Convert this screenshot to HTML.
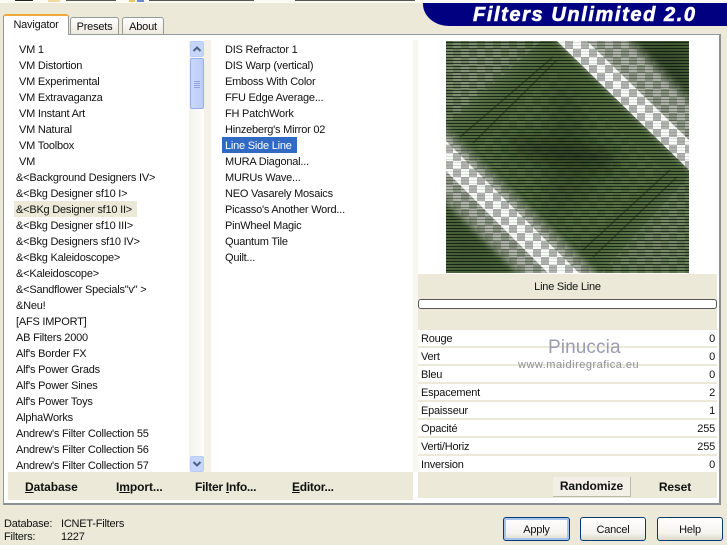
<!DOCTYPE html>
<html><head><meta charset="utf-8">
<style>
html,body{margin:0;padding:0}
body{width:727px;height:543px;overflow:hidden;position:relative;background:#ece9d8;font-family:"Liberation Sans",sans-serif;font-size:11px;letter-spacing:-.22px;color:#111}
.a{position:absolute;white-space:nowrap}
.t{position:absolute;white-space:nowrap;line-height:16px;height:16px;margin-top:1px}
.b{font-weight:bold;font-size:12px;letter-spacing:-.08px}
.row{position:absolute;left:418px;width:299px;height:16px;background:#fff;line-height:18px}
.row span{position:absolute;left:3px}
.row i{position:absolute;right:2px;font-style:normal}
.btn{position:absolute;box-sizing:border-box;border:1px solid #003c74;border-radius:3px;background:linear-gradient(#fff,#f4f3ee 70%,#dcd8c8);text-align:center;line-height:24px}
</style></head><body>
<div class="a" style="left:0;top:0;width:727px;height:3px;background:#fbfaf5"></div>
<div class="a" style="left:15px;top:0;width:18px;height:1px;background:#222"></div>
<div class="a" style="left:48px;top:0;width:12px;height:2px;background:#f3d9a4"></div>
<div class="a" style="left:66px;top:0;width:50px;height:1px;background:#555"></div>
<div class="a" style="left:129px;top:0;width:6px;height:2px;background:#e8c860"></div>
<div class="a" style="left:137px;top:0;width:7px;height:2px;background:#6a8ad0"></div>
<div class="a" style="left:149px;top:0;width:105px;height:1px;background:#555"></div>
<div class="a" style="left:295px;top:0;width:120px;height:1px;background:#555"></div>
<!-- logo -->
<div class="a" style="left:423px;top:3px;width:304px;height:23px;background:#000080;border-bottom-left-radius:26px 22px"></div>
<div class="a" style="left:473px;top:3px;font:italic bold 20px/25px 'Liberation Sans',sans-serif;color:#fff;letter-spacing:1.6px;-webkit-text-stroke:.6px #fff">Filters Unlimited 2.0</div>
<!-- panel -->
<div class="a" style="left:3px;top:34px;width:718px;height:471px;box-sizing:border-box;border:1px solid #919b9c;border-bottom:2px solid #8a9294;border-right:2px solid #8a9294;background:#fff"></div>
<!-- tabs -->
<div class="a" style="left:70px;top:17px;width:49px;height:17px;box-sizing:border-box;border:1px solid #919b9c;border-bottom:0;border-radius:3px 3px 0 0;background:linear-gradient(#fff,#ece9dc);text-align:center;line-height:18px">Presets</div>
<div class="a" style="left:122px;top:17px;width:42px;height:17px;box-sizing:border-box;border:1px solid #919b9c;border-bottom:0;border-radius:3px 3px 0 0;background:linear-gradient(#fff,#ece9dc);text-align:center;line-height:18px">About</div>
<div class="a" style="left:3px;top:14px;width:66px;height:21px;box-sizing:border-box;border:1px solid #919b9c;border-top:2px solid #f0a838;border-bottom:0;border-radius:3px 3px 0 0;background:#fff;text-align:center;line-height:18px">Navigator</div>
<!-- gutters -->
<div class="a" style="left:204px;top:40px;width:7px;height:432px;background:#f4f2e8"></div>
<div class="a" style="left:413px;top:40px;width:5px;height:432px;background:#f7f6ef"></div>
<!-- scrollbar -->
<div class="a" style="left:189px;top:41px;width:15px;height:431px;background:linear-gradient(90deg,#f3f3ee,#fdfdfa)"></div>
<div class="a" style="left:190px;top:41px;width:14px;height:16px;box-sizing:border-box;border:1px solid #b8cdf5;border-radius:2px;background:#c6d6fa"></div>
<svg class="a" style="left:190px;top:41px" width="14" height="16"><path d="M3.5 10L7 6.500L10.500 10" fill="none" stroke="#4d6185" stroke-width="2"/></svg>
<div class="a" style="left:190px;top:58px;width:14px;height:51px;box-sizing:border-box;border:1px solid #98b1e4;border-radius:2px;background:linear-gradient(90deg,#c9d8fb,#bccdf8)"></div>
<div class="a" style="left:194px;top:81px;width:6px;height:1px;background:#8ea6dc;box-shadow:0 2px 0 #8ea6dc,0 4px 0 #8ea6dc,0 6px 0 #8ea6dc"></div>
<div class="a" style="left:190px;top:456px;width:14px;height:16px;box-sizing:border-box;border:1px solid #b8cdf5;border-radius:2px;background:#c6d6fa"></div>
<svg class="a" style="left:190px;top:456px" width="14" height="16"><path d="M3.500 6L7 9.500L10.500 6" fill="none" stroke="#4d6185" stroke-width="2"/></svg>
<!-- left list -->
<div class="a" style="left:14px;top:201px;width:123px;height:16px;background:#ece9d8"></div>
<div class="t" style="left:19px;top:41px">VM 1</div>
<div class="t" style="left:19px;top:57px">VM Distortion</div>
<div class="t" style="left:19px;top:73px">VM Experimental</div>
<div class="t" style="left:19px;top:89px">VM Extravaganza</div>
<div class="t" style="left:19px;top:105px">VM Instant Art</div>
<div class="t" style="left:19px;top:121px">VM Natural</div>
<div class="t" style="left:19px;top:137px">VM Toolbox</div>
<div class="t" style="left:19px;top:153px">VM</div>
<div class="t" style="left:16px;top:169px">&amp;&lt;Background Designers IV&gt;</div>
<div class="t" style="left:16px;top:185px">&amp;&lt;Bkg Designer sf10 I&gt;</div>
<div class="t" style="left:16px;top:201px">&amp;&lt;BKg Designer sf10 II&gt;</div>
<div class="t" style="left:16px;top:217px">&amp;&lt;Bkg Designer sf10 III&gt;</div>
<div class="t" style="left:16px;top:233px">&amp;&lt;Bkg Designers sf10 IV&gt;</div>
<div class="t" style="left:16px;top:249px">&amp;&lt;Bkg Kaleidoscope&gt;</div>
<div class="t" style="left:16px;top:265px">&amp;&lt;Kaleidoscope&gt;</div>
<div class="t" style="left:16px;top:281px">&amp;&lt;Sandflower Specials"v" &gt;</div>
<div class="t" style="left:16px;top:297px">&amp;Neu!</div>
<div class="t" style="left:16px;top:313px">[AFS IMPORT]</div>
<div class="t" style="left:16px;top:329px">AB Filters 2000</div>
<div class="t" style="left:16px;top:345px">Alf's Border FX</div>
<div class="t" style="left:16px;top:361px">Alf's Power Grads</div>
<div class="t" style="left:16px;top:377px">Alf's Power Sines</div>
<div class="t" style="left:16px;top:393px">Alf's Power Toys</div>
<div class="t" style="left:16px;top:409px">AlphaWorks</div>
<div class="t" style="left:16px;top:425px">Andrew's Filter Collection 55</div>
<div class="t" style="left:16px;top:441px">Andrew's Filter Collection 56</div>
<div class="t" style="left:16px;top:457px">Andrew's Filter Collection 57</div>
<!-- middle list -->
<div class="a" style="left:222px;top:137px;width:75px;height:16px;background:#316ac5"></div>
<div class="t" style="left:225px;top:41px">DIS Refractor 1</div>
<div class="t" style="left:225px;top:57px">DIS Warp (vertical)</div>
<div class="t" style="left:225px;top:73px">Emboss With Color</div>
<div class="t" style="left:225px;top:89px">FFU Edge Average...</div>
<div class="t" style="left:225px;top:105px">FH PatchWork</div>
<div class="t" style="left:225px;top:121px">Hinzeberg's Mirror 02</div>
<div class="t" style="left:225px;top:137px;color:#fff">Line Side Line</div>
<div class="t" style="left:225px;top:153px">MURA Diagonal...</div>
<div class="t" style="left:225px;top:169px">MURUs Wave...</div>
<div class="t" style="left:225px;top:185px">NEO Vasarely Mosaics</div>
<div class="t" style="left:225px;top:201px">Picasso's Another Word...</div>
<div class="t" style="left:225px;top:217px">PinWheel Magic</div>
<div class="t" style="left:225px;top:233px">Quantum Tile</div>
<div class="t" style="left:225px;top:249px">Quilt...</div>
<!-- bottom bar -->
<div class="a" style="left:8px;top:472px;width:405px;height:28px;background:#ece9d8"></div>
<div class="a b" style="left:25px;top:480px"><u>D</u>atabase</div>
<div class="a b" style="left:116px;top:480px">I<u>m</u>port...</div>
<div class="a b" style="left:195px;top:480px;letter-spacing:-.25px">Filter <u>I</u>nfo...</div>
<div class="a b" style="left:292px;top:480px;letter-spacing:-.25px"><u>E</u>ditor...</div>
<!-- preview -->
<svg class="a" style="left:446px;top:41px" width="243" height="232" viewBox="0 0 243 232">
<defs>
<pattern id="c" width="16" height="16" patternUnits="userSpaceOnUse" x="7" y="0"><rect width="16" height="16" fill="#fafaf8"/><rect width="8" height="8" fill="#b2b4b0"/><rect x="8" y="8" width="8" height="8" fill="#b2b4b0"/></pattern>
<pattern id="c2" width="16" height="16" patternUnits="userSpaceOnUse" x="7" y="0"><rect width="16" height="16" fill="#b9bdb4"/><rect width="8" height="8" fill="#929a8c"/><rect x="8" y="8" width="8" height="8" fill="#929a8c"/></pattern>
<pattern id="f" width="16" height="16" patternUnits="userSpaceOnUse" x="7" y="0"><rect width="8" height="8" fill="#fff"/><rect x="8" y="8" width="8" height="8" fill="#fff"/></pattern>
<pattern id="s" width="3" height="3" patternUnits="userSpaceOnUse"><rect width="3" height="1" y="1" fill="#060d05"/></pattern>
<filter id="b3" x="-30%" y="-30%" width="160%" height="160%"><feGaussianBlur stdDeviation="4"/></filter>
<filter id="b9" x="-30%" y="-30%" width="160%" height="160%"><feGaussianBlur stdDeviation="10"/></filter>
<mask id="ms" maskUnits="userSpaceOnUse" x="0" y="0" width="243" height="232"><g filter="url(#b3)" fill="#fff"><polygon points="92,-20 164,-20 263,79 263,146"/><polygon points="-20,70 157,240 82,240 -20,140"/></g></mask>
<clipPath id="cb"><polygon points="111,0 141,0 243,99 243,129"/><polygon points="0,100 133,232 102,232 0,130"/></clipPath>
</defs>
<rect width="243" height="232" fill="#4f693d"/>
<polygon points="0,0 95,0 0,85" fill="#8e9a84" opacity=".55" filter="url(#b9)"/>
<polygon points="243,135 243,232 155,232" fill="#8e9a84" opacity=".4" filter="url(#b9)"/>
<polygon points="0,0 95,0 0,85" fill="url(#f)" opacity=".14"/>
<polygon points="243,135 243,232 155,232" fill="url(#f)" opacity=".1"/>
<polygon points="108,28 218,130 135,208 30,108" fill="url(#f)" opacity=".05"/>
<polygon points="170,0 243,0 243,70" fill="#2e3f26" opacity=".7" filter="url(#b9)"/>
<polygon points="0,165 0,232 65,232" fill="#3a5030" opacity=".6" filter="url(#b9)"/>
<polygon points="60,95 170,112 170,130 70,112" fill="#16220f" opacity=".7" filter="url(#b9)"/>
<polygon points="105,30 135,55 150,150 100,180" fill="#26391d" opacity=".4" filter="url(#b9)"/>
<rect width="243" height="232" fill="url(#s)" opacity=".72"/>
<rect width="243" height="232" fill="url(#c2)" mask="url(#ms)" opacity=".9"/>
<rect width="243" height="232" fill="url(#s)" mask="url(#ms)" opacity=".35"/>
<rect width="243" height="232" fill="url(#c)" clip-path="url(#cb)"/>
<rect width="243" height="232" fill="url(#s)" clip-path="url(#cb)" opacity=".12"/>
<g stroke="#1c2618" stroke-width="1.500" opacity=".55" fill="none">
<path d="M107 16L14 96M111 19L27 102M224 129L137 209M231 136L147 216"/>
</g>
</svg>
<!-- right side -->
<div class="a" style="left:418px;top:274px;width:299px;height:224px;background:#ece9d8"></div>
<div class="a" style="left:418px;top:279px;width:299px;text-align:center;line-height:16px">Line Side Line</div>
<div class="a" style="left:418px;top:299px;width:299px;height:10px;box-sizing:border-box;border:1px solid #555;border-radius:3px;background:#fff"></div>
<div class="row" style="top:330px"><span>Rouge</span><i>0</i></div>
<div class="row" style="top:348px"><span>Vert</span><i>0</i></div>
<div class="row" style="top:366px"><span>Bleu</span><i>0</i></div>
<div class="row" style="top:384px"><span>Espacement</span><i>2</i></div>
<div class="row" style="top:402px"><span>Epaisseur</span><i>1</i></div>
<div class="row" style="top:420px"><span>Opacité</span><i>255</i></div>
<div class="row" style="top:438px"><span>Verti/Horiz</span><i>255</i></div>
<div class="row" style="top:456px"><span>Inversion</span><i>0</i></div>
<div class="a" style="left:548px;top:337px;font-size:19px;line-height:22px;color:#9a9cb2;letter-spacing:.1px">Pinuccia</div>
<div class="a" style="left:518px;top:358px;font-size:11px;line-height:14px;color:#8d8f98;letter-spacing:.5px">www.maidiregrafica.eu</div>
<div class="a b" style="left:553px;top:477px;width:78px;height:20px;box-sizing:border-box;background:#f2f0e6;border-right:1px solid #bdb9a8;border-bottom:1px solid #bdb9a8;text-align:center;line-height:19px">Randomize</div>
<div class="a b" style="left:645px;top:477px;width:60px;text-align:center;line-height:20px">Reset</div>
<!-- status -->
<div class="t" style="left:4px;top:515px">Database:</div>
<div class="t" style="left:61px;top:515px">ICNET-Filters</div>
<div class="t" style="left:4px;top:528px">Filters:</div>
<div class="t" style="left:61px;top:528px">1227</div>
<!-- buttons -->
<div class="btn" style="left:503px;top:517px;width:67px;height:24px;box-shadow:inset 0 0 0 2px #a9c4ec">Apply</div>
<div class="btn" style="left:580px;top:517px;width:66px;height:24px">Cancel</div>
<div class="btn" style="left:657px;top:517px;width:66px;height:24px">Help</div>
</body></html>
